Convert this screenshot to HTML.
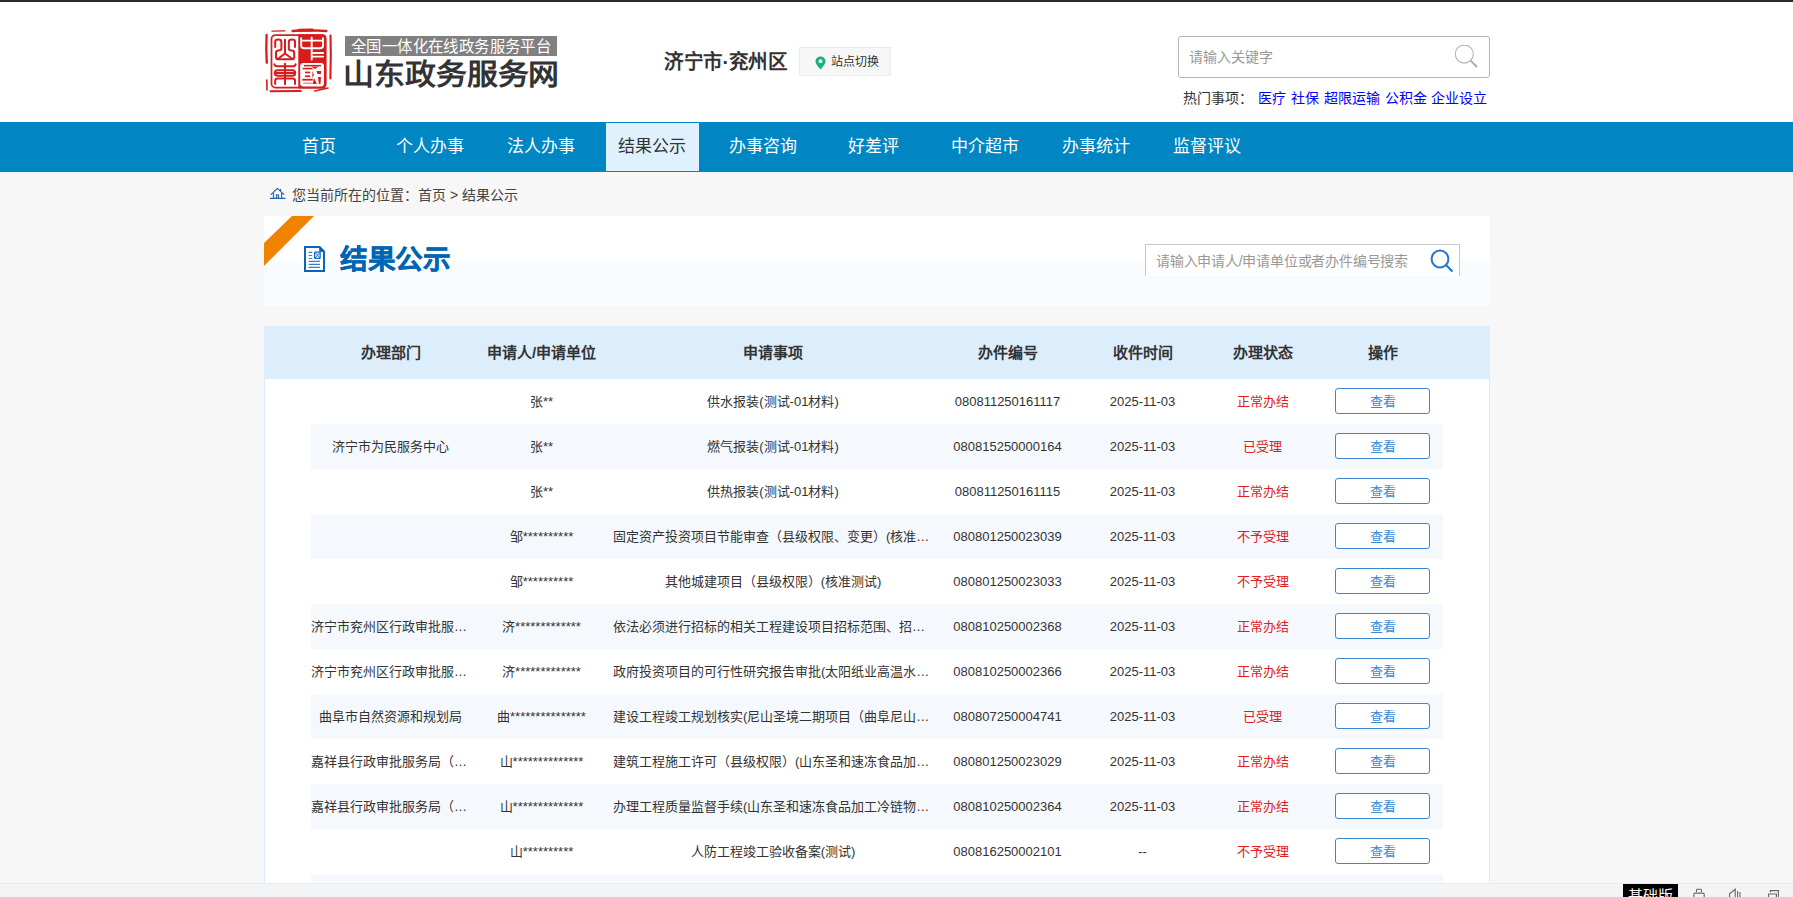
<!DOCTYPE html>
<html lang="zh-CN"><head><meta charset="utf-8">
<style>
*{margin:0;padding:0;box-sizing:border-box}
html,body{width:1793px;height:897px;overflow:hidden}
body{background:#f7f7f7;font-family:"Liberation Sans",sans-serif;color:#333;position:relative}
.abs{position:absolute}
#topline{left:0;top:0;width:1793px;height:2px;background:#2b2b2b}
#header{left:0;top:2px;width:1793px;height:120px;background:#fff}
#nav{left:0;top:122px;width:1793px;height:50px;background:#0086c3}
.nav-item{position:absolute;top:122px;height:50px;line-height:50px;font-size:17px;color:#fff;text-align:center;width:93px;padding-right:2px}
.nav-item.active{background:#dff1fc;color:#333;top:123px;height:48px;line-height:48px}
.crumb{left:292px;top:184.5px;font-size:14px;color:#444;line-height:20px;white-space:nowrap}
#sec{left:264px;top:216px;width:1226px;height:90px;background:linear-gradient(#fff 0,#fff 45px,#f9fcff 45px)}
#tbl{left:264px;top:326px;width:1226px;height:557px;background:#fff;border-left:1px solid #dbeafb;border-right:1px solid #dbeafb}
#thead{left:264px;top:326px;width:1226px;height:53px;background:#dcedfc}
.th{position:absolute;top:326px;height:53px;line-height:53px;font-size:15px;font-weight:bold;color:#333;text-align:center}
.row{position:absolute;left:311px;width:1132px;height:45px}
.row.s{background:#f5f9fd}
.td{position:absolute;top:0;height:45px;line-height:45px;font-size:13px;color:#333;text-align:center;white-space:nowrap;overflow:hidden;text-overflow:ellipsis}
.red{color:#e02020}
.btn{position:absolute;top:9px;left:13px;width:95px;height:26px;border:1.5px solid #3b86d1;border-radius:3px;background:#fff;color:#3a8ad4;font-size:13px;line-height:25px;text-align:center}
#bottombar{left:0;top:883px;width:1793px;height:14px;background:#f3f4f6;border-top:1px solid #eaeaea}
.gray-sub{left:345px;top:36px;width:212px;height:20px;background:#808080}
.gray-sub span{position:absolute;left:6px;top:1px;color:#fff;font-size:16px;line-height:20px;white-space:nowrap;transform:scaleX(0.962);transform-origin:0 0}
.site-title{left:343px;top:58.5px;font-size:30px;font-weight:bold;color:#333;line-height:34px;transform:scale(1.03,0.967);transform-origin:0 0;white-space:nowrap}
.city{left:664px;top:49px;font-size:20px;transform:scaleX(0.975);transform-origin:0 0;font-weight:bold;color:#333;line-height:26px;white-space:nowrap}
.switch{left:799px;top:47px;width:92px;height:29px;background:#f7f7f7;border:1px solid #ebebeb;font-size:12px;line-height:28px;color:#333;padding-left:31px;white-space:nowrap}
.sbox{left:1178px;top:36px;width:312px;height:42px;border:1px solid #b5b5b5;border-radius:3px;background:#fff;font-size:14px;color:#999;line-height:40px;padding-left:10px}
.hot{left:1183px;top:88px;font-size:14px;line-height:20px;color:#333;white-space:nowrap}
.hot a{color:#0000ff;text-decoration:none;margin-left:1px}
.sbox2{left:1145px;top:244px;width:315px;height:32px;border:1px solid #c8c8c8;border-bottom:none;background:#fff;font-size:14px;letter-spacing:-0.2px;color:#999;line-height:32px;padding-left:10px;white-space:nowrap}
.ptitle{left:339.5px;top:242px;font-size:28px;transform:scale(0.985,0.97);transform-origin:0 100%;font-weight:bold;color:#0066b3;line-height:36px;white-space:nowrap;-webkit-text-stroke:0.35px #0066b3}
.colon{display:inline-block;width:14px;text-indent:1px}
</style></head><body>
<div id="topline" class="abs"></div>
<div id="header" class="abs"></div>
<svg class="abs" style="left:262px;top:24px" width="74" height="74" viewBox="262 24 74 74">
<g fill="none" stroke="#d71c1c" stroke-linecap="round">
<path d="M272 31.2 L285 30.8" stroke-width="1.2"/>
<path d="M292.5 31 L300 30.5 L313 30.3 L326.4 31" stroke-width="2.3"/><path d="M299 30.2 L312 30" stroke-width="3"/>
<path d="M266.6 35 L266.3 50 L266.8 62.8" stroke-width="2.3"/>
<path d="M266.8 80 L267 90" stroke-width="1.6"/>
<path d="M330.5 35.5 L330.8 55 L330.4 78.5" stroke-width="2.1"/>
<path d="M270.5 91.2 L300.8 91" stroke-width="2"/>
<path d="M314.8 91 L328 88" stroke-width="1.6"/>
</g>
<path d="M298.3 34.3 H322.4 Q326.4 34.3 326.4 38.3 V84.4 Q326.4 88.4 322.4 88.4 H298.3 Z" fill="#d71c1c"/>
<rect x="271.5" y="35.1" width="54" height="52.5" rx="3.8" fill="none" stroke="#d71c1c" stroke-width="1.7"/>
<g fill="none" stroke="#d71c1c" stroke-width="2" stroke-linecap="round" stroke-linejoin="round">
<path d="M275.2 47 V41.8 Q275.2 39.6 278.2 39.6 Q281.4 39.6 281.4 42 V48.6 Q281.4 50.6 278.6 50.6 Q276 50.6 276 53 V57.2 Q276 59.3 278.4 59.3 H292 Q294.2 59.3 294.2 57.2 V53 Q294.2 50.6 291.6 50.6 Q288.8 50.6 288.8 48.6 V42 Q288.8 39.6 292 39.6 Q295 39.6 295 41.8 V47"/>
<path d="M285 39.8 V53.5 L277.8 59 M285 53.5 L292.4 59"/>
<path d="M274.3 64.2 Q274.8 66.2 277 66.2 H293 Q295.2 66.2 295.6 64.2 M285 63.8 V84.2"/>
<path d="M277.5 70.2 H292.5 Q295.2 70.2 295.2 73 Q295.2 75.8 292.5 75.8 H277.5 Q274.8 75.8 274.8 73 Q274.8 70.2 277.5 70.2 Z M275 73 H295"/>
<path d="M275.2 84 V80.8 Q275.2 78.6 277.8 78.6 H292.4 Q295 78.6 295 80.8 V84"/>
</g>
<g fill="none" stroke="#fff" stroke-width="1.9" stroke-linecap="round" stroke-linejoin="round">
<path d="M301.2 38.2 V45.4 Q301.2 48.2 304.2 48.2 H320 Q323 48.2 323 45.4 V38.2"/>
<path d="M302.5 40.6 H321.8 M311.7 37.6 V59.6 M311.7 53 H323.2 M311.7 56.6 H323.2"/>
</g>
<rect x="300.2" y="63.1" width="23.7" height="23.3" rx="3.2" fill="#fff"/>
<g fill="#d71c1c">
<rect x="304" y="64.9" width="17" height="1.5"/>
<rect x="302.6" y="67.8" width="10" height="1.6"/>
<rect x="305" y="71.6" width="5.2" height="1.7"/>
<rect x="305" y="75.4" width="5.2" height="1.7"/>
<rect x="302.3" y="78.8" width="10.5" height="1.8"/>
<rect x="303.2" y="82.6" width="8.6" height="1.2" opacity="0.6"/>
<path d="M311.5 66.4 L318.5 66.4 L315 69 Z M316.5 71 L321 71 L321 74 L317.5 74 Z M314 78 L317 84 L312.5 84 Z M318 77 L321 77 L320.5 84 L318.8 84 Z M312.4 71 L314 75 L312.4 78 Z"/>
</g>
</svg>
<div class="abs gray-sub"><span>全国一体化在线政务服务平台</span></div>
<div class="abs site-title">山东政务服务网</div>
<div class="abs city">济宁市·兖州区</div>
<div class="abs switch"><svg style="position:absolute;left:15px;top:8px" width="11" height="14" viewBox="0 0 11 14"><path d="M5.5 0.5 C2.5 0.5 0.5 2.7 0.5 5.3 C0.5 8.5 5.5 13.5 5.5 13.5 C5.5 13.5 10.5 8.5 10.5 5.3 C10.5 2.7 8.5 0.5 5.5 0.5 Z" fill="#1ab27a"/><circle cx="5.5" cy="5.2" r="1.9" fill="#fff"/></svg>站点切换</div>
<div class="abs sbox">请输入关键字<svg style="position:absolute;left:276px;top:8px" width="24" height="24" viewBox="0 0 24 24"><circle cx="9.3" cy="9.1" r="9" fill="none" stroke="#b4b4b4" stroke-width="1.1"/><path d="M15.6 15.6 L22 22" stroke="#aaa" stroke-width="1.9"/></svg></div>
<div class="abs hot">热门事项： <a>医疗</a> <a>社保</a> <a>超限运输</a> <a>公积金</a> <a>企业设立</a></div>
<div id="nav" class="abs"></div>

<div class="nav-item" style="left:273.0px">首页</div>
<div class="nav-item" style="left:384.0px">个人办事</div>
<div class="nav-item" style="left:495.0px">法人办事</div>
<div class="nav-item active" style="left:606.0px">结果公示</div>
<div class="nav-item" style="left:717.0px">办事咨询</div>
<div class="nav-item" style="left:828.0px">好差评</div>
<div class="nav-item" style="left:939.0px">中介超市</div>
<div class="nav-item" style="left:1050.0px">办事统计</div>
<div class="nav-item" style="left:1161.0px">监督评议</div>
<svg class="abs" style="left:270px;top:187px" width="16" height="13" viewBox="0 0 16 13"><path d="M1.2 7.4 L7.4 1.3 L13.8 7.4 M10.5 4.3 V2.2 M3.5 6.2 V11.4 M11.6 6.2 V11.4 M6.5 11.4 V7.7 H8.5 V11.4 M0.2 11.4 H15" fill="none" stroke="#2566a8" stroke-width="1.15" stroke-linecap="round" stroke-linejoin="round"/></svg>
<div class="abs crumb">您当前所在的位置：首页 &gt; 结果公示</div>
<div id="sec" class="abs"></div>
<svg class="abs" style="left:264px;top:216px" width="50" height="50"><path d="M28 0 H50 L0 50 V27 Z" fill="#f08300"/></svg>
<div class="abs" style="left:303px;top:245px;width:23px;height:28px;background:#fff"></div><svg class="abs" style="left:304px;top:246px" width="21" height="26" viewBox="0 0 21 26"><path d="M1 1 H15.6 L20 5.4 V25 H1 Z" fill="none" stroke="#0a64b9" stroke-width="2" stroke-linejoin="miter"/><path d="M15.6 1 L20 5.4 H15.6 Z" fill="#0a64b9" stroke="#0a64b9" stroke-width="0.8"/><path d="M4.6 6.4 H8.2 M4.6 9.5 H8.2 M4.6 12.5 H8.2 M4.6 15.4 H16 M4.6 18.4 H16 M4.6 21.4 H16" stroke="#3a7ec6" stroke-width="1.1"/><rect x="10.6" y="6.2" width="5.6" height="6.2" rx="0.6" fill="#e8f0fa" stroke="#1a6bbd" stroke-width="1.2"/><path d="M11 6.6 L16 12 M16 6.6 L11 12" stroke="#1a6bbd" stroke-width="0.9"/></svg>
<div class="abs ptitle">结果公示</div>
<div class="abs sbox2">请输入申请人/申请单位或者办件编号搜索<svg style="position:absolute;left:284px;top:4.2px" width="24" height="24" viewBox="0 0 24 24"><circle cx="10" cy="10" r="8.4" fill="none" stroke="#2277d2" stroke-width="2"/><path d="M16 16 L22.5 22.5" stroke="#2277d2" stroke-width="2.2"/></svg></div>

<div id="tbl" class="abs"></div><div id="thead" class="abs"></div>
<div class="th" style="left:311px;width:159px">办理部门</div>
<div class="th" style="left:470px;width:143px">申请人/申请单位</div>
<div class="th" style="left:613px;width:320px">申请事项</div>
<div class="th" style="left:933px;width:149px">办件编号</div>
<div class="th" style="left:1082px;width:121px">收件时间</div>
<div class="th" style="left:1203px;width:119px">办理状态</div>
<div class="th" style="left:1322px;width:121px">操作</div>
<div class="row" style="top:379px"><div class="td" style="left:0px;width:159px"></div><div class="td" style="left:159px;width:143px">张**</div><div class="td" style="left:302px;width:320px">供水报装(测试-01材料)</div><div class="td" style="left:622px;width:149px">080811250161117</div><div class="td" style="left:771px;width:121px">2025-11-03</div><div class="td red" style="left:892px;width:119px">正常办结</div><div class="td" style="left:1011px;width:121px"><div class="btn">查看</div></div></div>
<div class="row s" style="top:424px"><div class="td" style="left:0px;width:159px">济宁市为民服务中心</div><div class="td" style="left:159px;width:143px">张**</div><div class="td" style="left:302px;width:320px">燃气报装(测试-01材料)</div><div class="td" style="left:622px;width:149px">080815250000164</div><div class="td" style="left:771px;width:121px">2025-11-03</div><div class="td red" style="left:892px;width:119px">已受理</div><div class="td" style="left:1011px;width:121px"><div class="btn">查看</div></div></div>
<div class="row" style="top:469px"><div class="td" style="left:0px;width:159px"></div><div class="td" style="left:159px;width:143px">张**</div><div class="td" style="left:302px;width:320px">供热报装(测试-01材料)</div><div class="td" style="left:622px;width:149px">080811250161115</div><div class="td" style="left:771px;width:121px">2025-11-03</div><div class="td red" style="left:892px;width:119px">正常办结</div><div class="td" style="left:1011px;width:121px"><div class="btn">查看</div></div></div>
<div class="row s" style="top:514px"><div class="td" style="left:0px;width:159px"></div><div class="td" style="left:159px;width:143px">邹**********</div><div class="td" style="left:302px;width:320px">固定资产投资项目节能审查（县级权限、变更）(核准测试)</div><div class="td" style="left:622px;width:149px">080801250023039</div><div class="td" style="left:771px;width:121px">2025-11-03</div><div class="td red" style="left:892px;width:119px">不予受理</div><div class="td" style="left:1011px;width:121px"><div class="btn">查看</div></div></div>
<div class="row" style="top:559px"><div class="td" style="left:0px;width:159px"></div><div class="td" style="left:159px;width:143px">邹**********</div><div class="td" style="left:302px;width:320px">其他城建项目（县级权限）(核准测试)</div><div class="td" style="left:622px;width:149px">080801250023033</div><div class="td" style="left:771px;width:121px">2025-11-03</div><div class="td red" style="left:892px;width:119px">不予受理</div><div class="td" style="left:1011px;width:121px"><div class="btn">查看</div></div></div>
<div class="row s" style="top:604px"><div class="td" style="left:0px;width:159px">济宁市兖州区行政审批服务局</div><div class="td" style="left:159px;width:143px">济*************</div><div class="td" style="left:302px;width:320px">依法必须进行招标的相关工程建设项目招标范围、招标方式、招标组织形式审批</div><div class="td" style="left:622px;width:149px">080810250002368</div><div class="td" style="left:771px;width:121px">2025-11-03</div><div class="td red" style="left:892px;width:119px">正常办结</div><div class="td" style="left:1011px;width:121px"><div class="btn">查看</div></div></div>
<div class="row" style="top:649px"><div class="td" style="left:0px;width:159px">济宁市兖州区行政审批服务局</div><div class="td" style="left:159px;width:143px">济*************</div><div class="td" style="left:302px;width:320px">政府投资项目的可行性研究报告审批(太阳纸业高温水余热回收利用项目)</div><div class="td" style="left:622px;width:149px">080810250002366</div><div class="td" style="left:771px;width:121px">2025-11-03</div><div class="td red" style="left:892px;width:119px">正常办结</div><div class="td" style="left:1011px;width:121px"><div class="btn">查看</div></div></div>
<div class="row s" style="top:694px"><div class="td" style="left:0px;width:159px">曲阜市自然资源和规划局</div><div class="td" style="left:159px;width:143px">曲***************</div><div class="td" style="left:302px;width:320px">建设工程竣工规划核实(尼山圣境二期项目（曲阜尼山文化旅游）)</div><div class="td" style="left:622px;width:149px">080807250004741</div><div class="td" style="left:771px;width:121px">2025-11-03</div><div class="td red" style="left:892px;width:119px">已受理</div><div class="td" style="left:1011px;width:121px"><div class="btn">查看</div></div></div>
<div class="row" style="top:739px"><div class="td" style="left:0px;width:159px">嘉祥县行政审批服务局（县级）</div><div class="td" style="left:159px;width:143px">山**************</div><div class="td" style="left:302px;width:320px">建筑工程施工许可（县级权限）(山东圣和速冻食品加工冷链物流项目)</div><div class="td" style="left:622px;width:149px">080801250023029</div><div class="td" style="left:771px;width:121px">2025-11-03</div><div class="td red" style="left:892px;width:119px">正常办结</div><div class="td" style="left:1011px;width:121px"><div class="btn">查看</div></div></div>
<div class="row s" style="top:784px"><div class="td" style="left:0px;width:159px">嘉祥县行政审批服务局（县级）</div><div class="td" style="left:159px;width:143px">山**************</div><div class="td" style="left:302px;width:320px">办理工程质量监督手续(山东圣和速冻食品加工冷链物流项目)</div><div class="td" style="left:622px;width:149px">080810250002364</div><div class="td" style="left:771px;width:121px">2025-11-03</div><div class="td red" style="left:892px;width:119px">正常办结</div><div class="td" style="left:1011px;width:121px"><div class="btn">查看</div></div></div>
<div class="row" style="top:829px"><div class="td" style="left:0px;width:159px"></div><div class="td" style="left:159px;width:143px">山**********</div><div class="td" style="left:302px;width:320px">人防工程竣工验收备案(测试)</div><div class="td" style="left:622px;width:149px">080816250002101</div><div class="td" style="left:771px;width:121px">--</div><div class="td red" style="left:892px;width:119px">不予受理</div><div class="td" style="left:1011px;width:121px"><div class="btn">查看</div></div></div>
<div class="row s" style="top:874px"></div>
<div id="bottombar" class="abs"></div>
<div class="abs" style="left:1623px;top:884px;width:55px;height:13px;background:#000;overflow:hidden"><div style="position:absolute;left:5px;top:3px;color:#fff;font-size:15px;line-height:17px;white-space:nowrap">基础版</div></div>
<svg class="abs" style="left:1690px;top:887.5px" width="100" height="12" viewBox="1690 885 100 12">
<g fill="none" stroke="#666" stroke-width="1.1">
<path d="M1696.5 889 V887.2 Q1696.5 886.3 1697.4 886.3 H1700.6 Q1701.5 886.3 1701.5 887.2 V889 M1693.8 897 V891.5 Q1693.8 890.1 1695.2 890.1 H1702.8 Q1704.2 890.1 1704.2 891.5 V897"/>
<path d="M1729.6 897 V890.8 L1735.2 886.2 V897 M1737.6 888 V897 M1740 889 V897"/>
<path d="M1768.6 897 V891 H1776.4 V897 M1770.4 889.2 V887.6 H1778.4 V897"/>
</g>
</svg>
</body></html>
